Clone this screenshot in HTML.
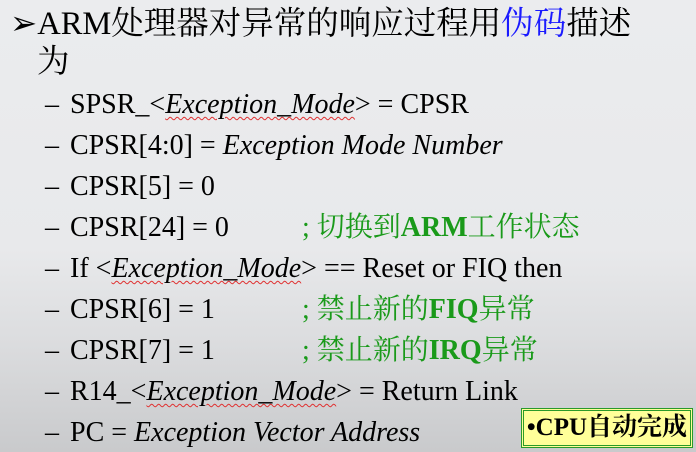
<!DOCTYPE html>
<html><head><meta charset="utf-8"><style>
html,body{margin:0;padding:0}
body{width:696px;height:452px;overflow:hidden;position:relative;
background:linear-gradient(180deg,#ebecee 0%,#e8e9eb 55%,#dcdddf 75%,#c9cacc 100%);
font-family:"Liberation Serif","Noto Serif CJK SC",serif;color:#000}
.t{position:absolute;white-space:nowrap;line-height:28px;height:28px}
.h{font-size:32.5px;line-height:32px;height:32px}
.l{font-size:28px;left:45px}
.l span.d{display:inline-block;width:25px}
i.w{text-decoration:underline wavy #e03030;text-decoration-thickness:1px;text-underline-offset:3px}
.g{color:#1a9a1a}
.box{position:absolute;left:521px;top:408px;width:166px;height:34px;background:#ffff99;border:3px double #2a9a2a;font-weight:bold;font-size:25px;line-height:34px;text-align:center}
</style></head><body>
<div class="t h" style="left:10px;top:8px">➢ARM处理器对异常的响应过程用<span style="color:#1a1aff">伪码</span>描述</div>
<div class="t h" style="left:37px;top:46px">为</div>
<div class="t l" style="top:91px"><span class="d">–</span>SPSR_&lt;<i class="w">Exception_Mode</i>&gt; = CPSR</div>
<div class="t l" style="top:132px"><span class="d">–</span>CPSR[4:0] = <i>Exception Mode Number</i></div>
<div class="t l" style="top:173px"><span class="d">–</span>CPSR[5] = 0</div>
<div class="t l" style="top:214px"><span class="d">–</span>CPSR[24] = 0</div>
<div class="t l g" style="left:302px;top:214px">; 切换到<b>ARM</b>工作状态</div>
<div class="t l" style="top:255px"><span class="d">–</span>If &lt;<i class="w">Exception_Mode</i>&gt; == Reset or FIQ then</div>
<div class="t l" style="top:296px"><span class="d">–</span>CPSR[6] = 1</div>
<div class="t l g" style="left:302px;top:296px">; 禁止新的<b>FIQ</b>异常</div>
<div class="t l" style="top:337px"><span class="d">–</span>CPSR[7] = 1</div>
<div class="t l g" style="left:302px;top:337px">; 禁止新的<b>IRQ</b>异常</div>
<div class="t l" style="top:378px"><span class="d">–</span>R14_&lt;<i class="w">Exception_Mode</i>&gt; = Return Link</div>
<div class="t l" style="top:419px"><span class="d">–</span>PC = <i>Exception Vector Address</i></div>
<div class="box">•CPU自动完成</div>
</body></html>
